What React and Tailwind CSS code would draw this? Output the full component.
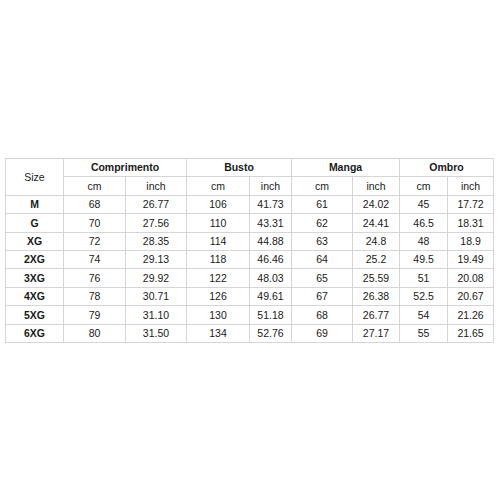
const rows = [
  ["M", "68", "26.77", "106", "41.73", "61", "24.02", "45", "17.72"],
  ["G", "70", "27.56", "110", "43.31", "62", "24.41", "46.5", "18.31"],
  ["XG", "72", "28.35", "114", "44.88", "63", "24.8", "48", "18.9"],
  ["2XG", "74", "29.13", "118", "46.46", "64", "25.2", "49.5", "19.49"],
  ["3XG", "76", "29.92", "122", "48.03", "65", "25.59", "51", "20.08"],
  ["4XG", "78", "30.71", "126", "49.61", "67", "26.38", "52.5", "20.67"],
  ["5XG", "79", "31.10", "130", "51.18", "68", "26.77", "54", "21.26"],
  ["6XG", "80", "31.50", "134", "52.76", "69", "27.17", "55", "21.65"],
];

const widths = [58, 62, 61, 63, 42, 61, 47, 48, 46];
const cell = "border border-[#d6d6d6] text-center p-0 h-[18.4px] leading-none";

export default function App() {
  return (
    <div
      className="w-[500px] h-[500px] bg-white pt-[158px] pl-[5px] text-[#1a1a1a] text-[10.5px]"
      style={{ fontFamily: '"Liberation Sans", Arial, sans-serif' }}
    >
      <table className="table-fixed border-collapse w-[488px]">
        <colgroup>
          {widths.map((w, i) => (
            <col key={i} style={{ width: w }} />
          ))}
        </colgroup>
        <thead>
          <tr>
            <th rowSpan={2} className={cell + " font-normal"}>Size</th>
            <th colSpan={2} className={cell + " font-bold"}>Comprimento</th>
            <th colSpan={2} className={cell + " font-bold"}>Busto</th>
            <th colSpan={2} className={cell + " font-bold"}>Manga</th>
            <th colSpan={2} className={cell + " font-bold"}>Ombro</th>
          </tr>
          <tr>
            {["cm", "inch", "cm", "inch", "cm", "inch", "cm", "inch"].map((t, i) => (
              <th key={i} className={cell + " font-normal"}>{t}</th>
            ))}
          </tr>
        </thead>
        <tbody>
          {rows.map((r) => (
            <tr key={r[0]}>
              {r.map((v, i) => (
                <td key={i} className={cell + (i === 0 ? " font-bold" : "")}>{v}</td>
              ))}
            </tr>
          ))}
        </tbody>
      </table>
    </div>
  );
}
